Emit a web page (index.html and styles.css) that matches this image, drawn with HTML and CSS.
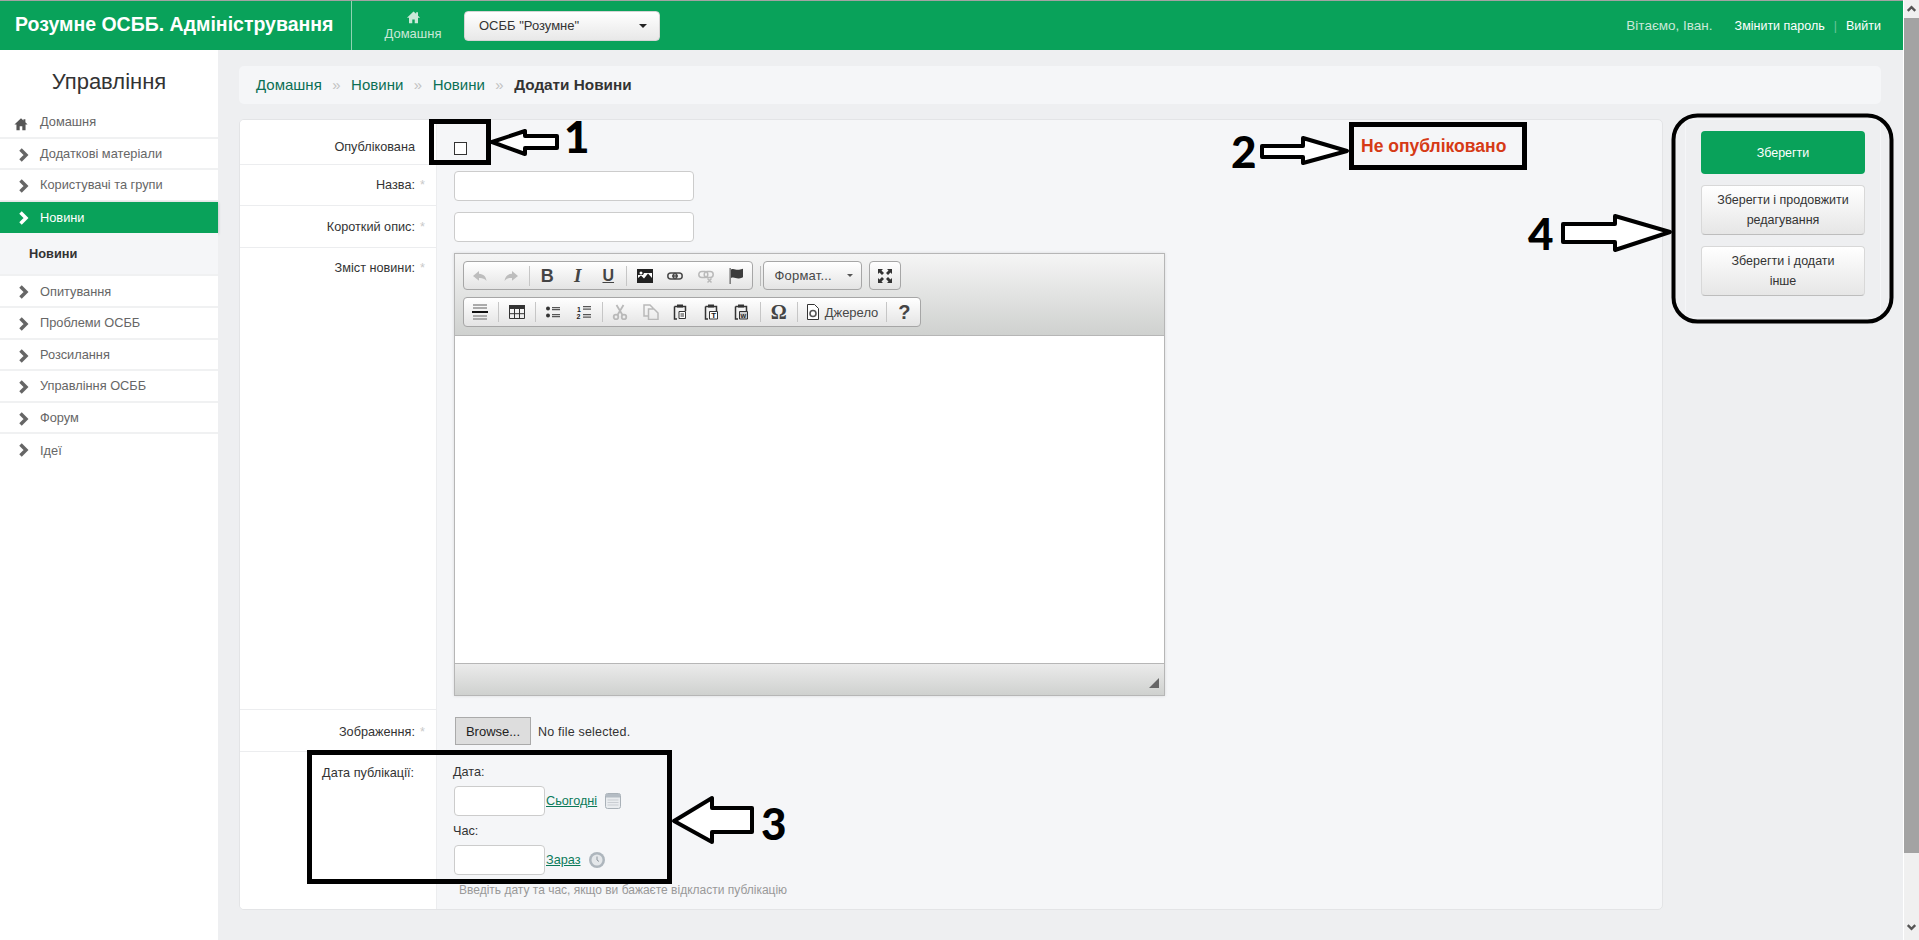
FILE: index.html
```html
<!DOCTYPE html>
<html lang="uk">
<head>
    <meta charset="UTF-8">
    <meta name="viewport" content="width=device-width, initial-scale=1.0">
    <title>Додати Новини</title>
    <link rel="stylesheet" href="styles.css">
</head>
<body>
    <div class="page">
        <header class="topbar">
            <div class="brand">Розумне ОСББ. Адміністрування</div>
            <a class="top-home">
                <svg class="top-home-icon" viewBox="0 0 16 16"><path d="M8 1.5 1 8.2h2.2V14h3.5V10h2.6v4h3.5V8.2H15L12.8 6V2.5h-2v1.6z"/></svg>
                <span>Домашня</span>
            </a>
            <div class="org-select"><span>ОСББ "Розумне"</span><i class="caret"></i></div>
            <div class="top-user">
                <span class="welcome">Вітаємо, <b>Іван.</b></span>
                <a>Змінити пароль</a>
                <span class="pipe">|</span>
                <a>Вийти</a>
            </div>
        </header>

        <div class="main">
            <aside class="sidebar">
                <h2 class="side-title">Управління</h2>
                <ul class="side-menu">
                    <li><svg class="side-icon" viewBox="0 0 16 16"><path d="M8 1.5 0.5 8.5h2.3V15h3.7v-4.5h3V15h3.7V8.5h2.3L13 6V2.5h-2.2v1.4z"/></svg>Домашня</li>
                    <li><svg class="side-chev" viewBox="0 0 12 14"><path d="M2.5 1.5 8 7l-5.5 5.5"/></svg>Додаткові матеріали</li>
                    <li><svg class="side-chev" viewBox="0 0 12 14"><path d="M2.5 1.5 8 7l-5.5 5.5"/></svg>Користувачі та групи</li>
                    <li class="active"><svg class="side-chev" viewBox="0 0 12 14"><path d="M2.5 1.5 8 7l-5.5 5.5"/></svg>Новини</li>
                    <li class="sub">Новини</li>
                    <li><svg class="side-chev" viewBox="0 0 12 14"><path d="M2.5 1.5 8 7l-5.5 5.5"/></svg>Опитування</li>
                    <li><svg class="side-chev" viewBox="0 0 12 14"><path d="M2.5 1.5 8 7l-5.5 5.5"/></svg>Проблеми ОСББ</li>
                    <li><svg class="side-chev" viewBox="0 0 12 14"><path d="M2.5 1.5 8 7l-5.5 5.5"/></svg>Розсилання</li>
                    <li><svg class="side-chev" viewBox="0 0 12 14"><path d="M2.5 1.5 8 7l-5.5 5.5"/></svg>Управління ОСББ</li>
                    <li><svg class="side-chev" viewBox="0 0 12 14"><path d="M2.5 1.5 8 7l-5.5 5.5"/></svg>Форум</li>
                    <li class="last"><svg class="side-chev" viewBox="0 0 12 14"><path d="M2.5 1.5 8 7l-5.5 5.5"/></svg>Ідеї</li>
                </ul>
            </aside>

            <div class="content">
                <div class="breadcrumb">
                    <a>Домашня</a><span class="sep">»</span><a>Новини</a><span class="sep">»</span><a>Новини</a><span class="sep">»</span><b>Додати Новини</b>
                </div>

                <div class="columns">
                    <form class="card">
                        <div class="form-row row-check">
                            <div class="form-label">Опублікована</div>
                            <div class="form-field"><span class="checkbox"></span><span class="status">Не опубліковано</span></div>
                        </div>
                        <div class="form-row row-text">
                            <div class="form-label">Назва:<span class="req">*</span></div>
                            <div class="form-field"><input class="text-input" type="text"></div>
                        </div>
                        <div class="form-row row-text2">
                            <div class="form-label">Короткий опис:<span class="req">*</span></div>
                            <div class="form-field"><input class="text-input" type="text"></div>
                        </div>
                        <div class="form-row row-editor">
                            <div class="form-label">Зміст новини:<span class="req">*</span></div>
                            <div class="form-field">
                                <div class="editor">
                                    <div class="editor-top">
                                        <div class="tool-line">
                                            <div class="toolgroup">
                                                <span class="tool"><svg viewBox="0 0 16 16" class="off"><path d="M7 3 1 8l6 4.8V10c3-.2 5.5.5 7.5 3-.5-4.5-3-7-7.5-7.3z"/></svg></span>
                                                <span class="tool"><svg viewBox="0 0 16 16" class="off"><path d="M9 3l6 5-6 4.8V10c-3-.2-5.5.5-7.5 3C2 8.500 4.500 6 9 5.700z"/></svg></span>
                                                <i class="tool-sep"></i>
                                                <span class="tool letter bold">B</span>
                                                <span class="tool letter ital">I</span>
                                                <span class="tool letter under">U</span>
                                                <i class="tool-sep"></i>
                                                <span class="tool"><svg viewBox="0 0 16 16"><rect x="0.500" y="1.500" width="15" height="13" fill="#fff" stroke="#222"/><path d="M1 14V10l3-2.500 3 3 4-5 4 4.500v4z" fill="#222"/><path d="M1 2h14v3H7L6 7H1z" fill="#222"/><circle cx="4" cy="5" r="1.500" fill="#fff"/></svg></span>
                                                <span class="tool"><svg viewBox="0 0 16 16" class="line"><rect x="0.800" y="5" width="9" height="6" rx="3"/><rect x="6.200" y="5" width="9" height="6" rx="3"/><path d="M5 8h6"/></svg></span>
                                                <span class="tool"><svg viewBox="0 0 16 16" class="line faint"><rect x="0.800" y="3.500" width="9" height="6" rx="3"/><rect x="6.200" y="3.500" width="9" height="6" rx="3"/><path d="M9.500 10.500l4 4m0-4-4 4"/></svg></span>
                                                <span class="tool"><svg viewBox="0 0 16 16"><path d="M1.500 0h1.300v16H1.500z" fill="#666"/><path d="M3 1.500c3-1.500 5 1 8 .2 1.500-.3 3-.7 4-1v8.500c-1 .6-2.500 1-4 1.200-3 .4-5-1.800-8-.4z" fill="#3c3c3c"/></svg></span>
                                            </div>
                                            <i class="bar-sep"></i>
                                            <div class="combo"><span>Формат...</span><i class="caret small"></i></div>
                                            <div class="toolgroup maximize">
                                                <span class="tool"><svg viewBox="0 0 16 16"><path d="M1 1h5L4.500 2.500 7 5 5 7 2.500 4.500 1 6zM15 1v5l-1.500-1.500L11 7 9 5l2.500-2.500L10 1zM1 15v-5l1.500 1.500L5 9l2 2-2.500 2.500L6 15zM15 15h-5l1.500-1.500L9 11l2-2 2.500 2.500L15 10z" fill="#333"/></svg></span>
                                            </div>
                                        </div>
                                        <div class="tool-line">
                                            <div class="toolgroup tall">
                                                <span class="tool"><svg viewBox="0 0 16 16"><path d="M1 0h14v2H1zM1 3h14v2H1zM1 11h14v2H1zM1 14h14v2H1z" fill="#aaa"/><path d="M0 7h16v2H0z" fill="#111"/></svg></span>
                                                <i class="tool-sep"></i>
                                                <span class="tool"><svg viewBox="0 0 16 16"><rect x="0" y="1" width="16" height="4" fill="#333"/><path d="M.500 5v9.500h15V5M5.500 5v9.500M10.500 5v9.500M.500 9.700h15" fill="none" stroke="#333"/></svg></span>
                                                <i class="tool-sep"></i>
                                                <span class="tool"><svg viewBox="0 0 16 16"><circle cx="3" cy="4.500" r="2" fill="#333"/><circle cx="3" cy="11.500" r="2" fill="#333"/><path d="M7 3h8v1.200H7zM7 5h8v1.200H7zM7 10h8v1.200H7zM7 12h8v1.200H7z" fill="#555"/></svg></span>
                                                <span class="tool"><svg viewBox="0 0 16 16"><text x="1" y="7.500" class="mini">1</text><text x="0.500" y="14.500" class="mini">2</text><path d="M7 2h8v1.200H7zM7 4.500h8v1.200H7zM7 10h8v1.200H7zM7 12.500h8v1.200H7z" fill="#555"/></svg></span>
                                                <i class="tool-sep"></i>
                                                <span class="tool"><svg viewBox="0 0 16 16" class="line faint thick"><circle cx="4" cy="13" r="2.300"/><circle cx="12" cy="13" r="2.300"/><path d="M5.500 11 11.500 1M10.500 11 4.500 1"/></svg></span>
                                                <span class="tool"><svg viewBox="0 0 16 16" class="line faint"><path d="M1 1h6l3 3v1H5.500v7H1zM5.500 5H11l4 4v6.500H5.500z" fill="none"/></svg></span>
                                                <span class="tool"><svg viewBox="0 0 16 16"><use href="#clip"/><path d="M6 7.500h6.500v7H6z" fill="#fff" stroke="#333"/><path d="M7.500 9.500h3.500v1H7.500zM7.500 11.500h3.500v1H7.500z" fill="#333"/></svg></span>
                                                <span class="tool"><svg viewBox="0 0 16 16"><use href="#clip"/><path d="M5.500 7.500h8v7.500h-8z" fill="#fff" stroke="#333"/><text x="7.300" y="14" class="mini strong">T</text></svg></span>
                                                <span class="tool"><svg viewBox="0 0 16 16"><use href="#clip"/><path d="M5.500 7.500h8v7.500h-8z" fill="#ccc" stroke="#333"/><text x="6.500" y="14" class="mini narrow">W</text></svg></span>
                                                <i class="tool-sep"></i>
                                                <span class="tool letter omega">Ω</span>
                                                <i class="tool-sep"></i>
                                                <span class="tool source"><svg viewBox="0 0 16 16"><path d="M2.500.500h7l4 4v11h-11z" fill="#fff" stroke="#333"/><circle cx="8" cy="9.500" r="3" fill="none" stroke="#555" stroke-width="1.600"/></svg><span>Джерело</span></span>
                                                <i class="tool-sep"></i>
                                                <span class="tool letter help">?</span>
                                            </div>
                                        </div>
                                    </div>
                                    <div class="editor-body"></div>
                                    <div class="editor-bottom"><i class="resizer"></i></div>
                                </div>
                            </div>
                        </div>
                        <div class="form-row row-file">
                            <div class="form-label">Зображення:<span class="req">*</span></div>
                            <div class="form-field"><span class="file-btn">Browse...</span><span class="file-name">No file selected.</span></div>
                        </div>
                        <div class="form-row row-date">
                            <div class="form-label">Дата публікації:</div>
                            <div class="form-field">
                                <div class="date-label">Дата:</div>
                                <div class="date-line">
                                    <input class="date-input" type="text"><a class="date-link">Сьогодні</a>
                                    <svg class="date-icon" viewBox="0 0 16 16"><rect x="0.500" y="0.500" width="15" height="15" rx="2" fill="#e9ecef" stroke="#a9b1b8"/><rect x="1" y="1" width="14" height="3.500" fill="#b4bcc4"/><path d="M2.500 7h11M2.500 9.500h11M2.500 12h11" stroke="#c9cdd2"/></svg>
                                </div>
                                <div class="date-label">Час:</div>
                                <div class="date-line">
                                    <input class="date-input" type="text"><a class="date-link">Зараз</a>
                                    <svg class="date-icon clock" viewBox="0 0 16 16"><circle cx="8" cy="8" r="8" fill="#aeb6bd"/><circle cx="8" cy="8" r="5.500" fill="#e4e7ea"/><path d="M8 4.500V8l2 1.500" fill="none" stroke="#8d959c"/></svg>
                                </div>
                                <p class="help-text">Введіть дату та час, якщо ви бажаєте відкласти публікацію</p>
                            </div>
                        </div>
                    </form>

                    <div class="actions">
                        <button class="btn primary" type="button">Зберегти</button>
                        <button class="btn" type="button">Зберегти і продовжити<br>редагування</button>
                        <button class="btn" type="button">Зберегти і додати<br>інше</button>
                    </div>
                </div>
            </div>
        </div>
    </div>

    <div class="scrollbar">
        <svg class="scroll-arrow" viewBox="0 0 16 18"><path d="M4 11l4-4 4 4" /></svg>
        <div class="scroll-thumb"></div>
        <svg class="scroll-arrow down" viewBox="0 0 16 18"><path d="M4 7l4 4 4-4" /></svg>
    </div>

    <!-- numbered marks drawn over the screenshot -->
    <svg class="marks" viewBox="0 0 1919 940">
        <defs>
            <g id="clip"><path d="M1.500 2.500h11V7M4 15H1.500V2.500" fill="none" stroke="#333" stroke-width="1.500"/><rect x="4" y="0.500" width="6" height="3" fill="#333"/></g>
        </defs>
        <g class="mark-box">
            <rect x="431.500" y="121.500" width="57" height="41"/>
            <rect x="1351.500" y="124.500" width="173" height="43"/>
            <rect x="309.500" y="752.500" width="360" height="129"/>
            <rect class="round" x="1673.500" y="115.500" width="218" height="206" rx="24"/>
        </g>
        <g class="mark-arrow">
            <polygon points="492,142 525,131 525,136 557,136 557,148 525,148 525,154"/>
            <polygon points="1262,146 1303,146 1303,138 1347,151 1303,163 1303,157 1262,157"/>
            <polygon points="674,821 712,798 712,808 752,808 752,832 712,832 712,842"/>
            <polygon points="1563,224 1615,224 1615,216 1670,232 1615,250 1615,242 1563,242"/>
        </g>
        <g class="mark-num">
            <text x="564" y="153">1</text>
            <text x="1231" y="168">2</text>
            <text x="761" y="840">3</text>
            <text x="1528" y="250">4</text>
        </g>
    </svg>
</body>
</html>
```

FILE: styles.css
```css
html, body {
    margin: 0;
    height: 940px;
    overflow: hidden;
}
body {
    display: flex;
    position: relative;
    font-family: "Liberation Sans", Arial, sans-serif;
    font-size: 12.700px;
    color: #333;
    background-color: #eeeff1;
}
a {
    cursor: pointer;
}
.page {
    flex: 1;
    min-width: 0;
    display: flex;
    flex-direction: column;
}

/* top bar */
.topbar {
    height: 50px;
    flex: none;
    box-sizing: border-box;
    display: flex;
    align-items: center;
    border-top: 1px solid #a3a3a3;
    background-color: #09a25a;
    color: #fff;
}
.brand {
    width: 336px;
    height: 49px;
    box-sizing: content-box;
    padding-left: 15px;
    border-right: 1px solid #8fd3b2;
    font-size: 19.500px;
    font-weight: bold;
    line-height: 47px;
    white-space: nowrap;
}
.top-home {
    width: 112px;
    box-sizing: border-box;
    padding-left: 10px;
    display: flex;
    flex-direction: column;
    align-items: center;
    font-size: 13px;
    color: #c9e8d8;
}
.top-home-icon {
    width: 15px;
    height: 15px;
    margin-bottom: 1px;
    fill: #c9e8d8;
}
.org-select {
    width: 196px;
    height: 30px;
    box-sizing: border-box;
    padding: 0 12px 0 14px;
    display: flex;
    align-items: center;
    justify-content: space-between;
    border-radius: 4px;
    border: 1px solid #d5d5d5;
    background: linear-gradient(#fff, #e8e8e8);
    font-size: 13px;
    color: #333;
}
.caret {
    width: 0;
    height: 0;
    border-left: 4px solid transparent;
    border-right: 4px solid transparent;
    border-top: 4px solid #222;
}
.caret.small {
    border-left-width: 3px;
    border-right-width: 3px;
    border-top: 3px solid #555;
}
.top-user {
    margin-left: auto;
    padding-right: 22px;
    display: flex;
    align-items: center;
    font-size: 12.500px;
}
.top-user a {
    color: #fff;
}
.welcome {
    margin-right: 22px;
    font-size: 13.500px;
    color: #c9e8d8;
}
.welcome b {
    font-weight: normal;
}
.pipe {
    margin: 0 9px;
    color: #6cc498;
}

/* left menu */
.main {
    flex: 1;
    display: flex;
    min-height: 0;
}
.sidebar {
    width: 218px;
    flex: none;
    background-color: #fff;
}
.side-title {
    margin: 0;
    padding: 20px 0 13px;
    font-size: 22px;
    font-weight: normal;
    line-height: 24px;
    text-align: center;
    color: #333;
}
.side-menu {
    margin: 0;
    padding: 0;
    list-style: none;
    font-size: 12.800px;
    color: #666;
}
.side-menu li {
    height: 31.600px;
    box-sizing: border-box;
    display: flex;
    align-items: center;
    padding-left: 40px;
    position: relative;
    border-bottom: 2px solid #f0f1f2;
}
.side-menu li.last {
    border-bottom: none;
}
.side-menu li.active {
    background-color: #09a25a;
    color: #fff;
    border-bottom: none;
    box-shadow: 0 1px 3px rgba(0, 0, 0, 0.25);
}
.side-menu li.sub {
    height: 43px;
    padding-left: 29px;
    background-color: #f5f6f8;
    font-weight: bold;
    color: #333;
}
.side-icon {
    position: absolute;
    left: 14px;
    top: 10px;
    width: 14px;
    height: 14px;
    fill: #555;
}
.side-chev {
    position: absolute;
    left: 18px;
    top: 9px;
    width: 12px;
    height: 14px;
    fill: none;
    stroke: #666;
    stroke-width: 3.500;
}
.active .side-chev {
    stroke: #fff;
}

/* breadcrumb */
.content {
    flex: 1;
    min-width: 0;
    padding: 16px 22px 0 21px;
}
.breadcrumb {
    height: 38px;
    box-sizing: border-box;
    padding: 0 0 1px 17px;
    display: flex;
    align-items: center;
    border-radius: 5px;
    background-color: #f5f6f8;
    font-size: 15px;
    color: #0b6f55;
}
.breadcrumb b {
    font-size: 15.300px;
    color: #333;
}
.breadcrumb .sep {
    margin: 0 10.500px;
    color: #c2c2c2;
}
.columns {
    display: flex;
    gap: 22px;
    margin-top: 15px;
    align-items: flex-start;
}

/* form */
.card {
    flex: 1;
    min-width: 0;
    height: 791px;
    box-sizing: border-box;
    display: flex;
    flex-direction: column;
    overflow: hidden;
    border: 1px solid #e3e4e6;
    border-radius: 5px;
    background-color: #f5f6f8;
}
.form-row {
    display: flex;
}
.form-label {
    width: 196px;
    flex: none;
    box-sizing: border-box;
    padding: 12px 21px 0 0;
    text-align: right;
    background-color: #fff;
    border-bottom: 1px solid #ecedef;
    line-height: 16px;
}
.form-field {
    flex: 1;
    min-width: 0;
    box-sizing: border-box;
    padding-left: 17px;
    border-left: 1px solid #ecedef;
    position: relative;
}
.req {
    display: inline-block;
    margin: 0 -10px 0 2px;
    width: 8px;
    color: #c9c9c9;
}
.row-check { height: 45px; }
.row-check .form-label { padding-top: 19px; }
.row-text { height: 41px; }
.row-text .form-field { padding-top: 6px; }
.row-text2 { height: 42px; }
.row-text2 .form-field { padding-top: 6px; }
.row-text2 .form-label { padding-top: 13px; }
.row-editor { height: 462px; }
.row-editor .form-field { padding-top: 5px; }
.row-file { height: 42px; }
.row-file .form-label { padding-top: 14px; }
.row-file .form-field { padding-top: 7px; display: flex; align-items: flex-start; }
.row-date { flex: 1; }
.row-date .form-label { border-bottom: none; padding-top: 13px; padding-right: 22px; }
.checkbox {
    display: block;
    width: 11px;
    height: 11px;
    margin-top: 22px;
    background-color: #fff;
    border: 1px solid #333;
}
.status {
    position: absolute;
    left: 924px;
    top: 16px;
    font-size: 17.500px;
    font-weight: bold;
    line-height: 20px;
    color: #d63a16;
}
.text-input {
    display: block;
    width: 240px;
    height: 30px;
    box-sizing: border-box;
    border: 1px solid #ccc;
    border-radius: 4px;
    background-color: #fff;
}

/* text editor */
.editor {
    width: 711px;
    height: 443px;
    box-sizing: border-box;
    display: flex;
    flex-direction: column;
    border: 1px solid #b6b6b6;
    box-shadow: 0 0 3px rgba(0, 0, 0, 0.12);
}
.editor-top {
    height: 82px;
    flex: none;
    box-sizing: border-box;
    padding: 7px 0 0 8px;
    border-bottom: 1px solid #b6b6b6;
    background: linear-gradient(#f5f5f5, #cfd1cf);
}
.tool-line {
    display: flex;
    align-items: flex-start;
    margin-bottom: 7px;
}
.toolgroup {
    height: 29px;
    box-sizing: border-box;
    padding-left: 1px;
    display: flex;
    align-items: center;
    border: 1px solid #a6a6a6;
    border-radius: 4px;
    background: linear-gradient(#fff, #e4e4e4);
}
.toolgroup.tall {
    height: 30px;
}
.maximize {
    margin-left: 7px;
    padding-left: 0;
}
.tool {
    width: 30.500px;
    flex: none;
    display: flex;
    align-items: center;
    justify-content: center;
}
.tool svg {
    width: 16px;
    height: 16px;
    fill: #444;
}
.tool svg.off {
    fill: #bdbdbd;
}
.tool svg.line {
    fill: none;
    stroke: #4a4a4a;
    stroke-width: 1.500;
}
.tool svg.faint {
    stroke: #b9b9b9;
}
.tool svg.thick {
    stroke-width: 1.800;
}
.tool-sep {
    width: 1px;
    height: 20px;
    flex: none;
    margin: 0 2.500px;
    background-color: #c6c6c6;
}
.bar-sep {
    width: 1px;
    height: 20px;
    margin: 5px 2px 0 7px;
    background-color: #bbb;
}
.letter {
    font-size: 18px;
    font-weight: bold;
    color: #444;
    line-height: 20px;
}
.ital {
    font-family: "Liberation Serif", serif;
    font-style: italic;
    font-size: 19px;
}
.under {
    text-decoration: underline;
    font-size: 16px;
}
.omega {
    font-family: "Liberation Serif", serif;
    font-size: 20px;
}
.help {
    font-size: 20px;
}
.mini {
    font-family: "Liberation Sans", sans-serif;
    font-size: 7px;
    font-weight: bold;
    fill: #222;
}
.mini.strong {
    font-size: 8px;
}
.mini.narrow {
    font-size: 6px;
}
.tool.source {
    width: 83px;
    gap: 4px;
    font-size: 13px;
    color: #474747;
}
.combo {
    width: 99px;
    height: 29px;
    box-sizing: border-box;
    padding: 0 8px 0 11px;
    display: flex;
    align-items: center;
    justify-content: space-between;
    border: 1px solid #a6a6a6;
    border-radius: 4px;
    background: linear-gradient(#fff, #e4e4e4);
    font-size: 13px;
    letter-spacing: 0.200px;
    color: #484848;
}
.editor-body {
    flex: 1;
    background-color: #fff;
}
.editor-bottom {
    height: 31px;
    flex: none;
    position: relative;
    border-top: 1px solid #b6b6b6;
    background: linear-gradient(#ebebeb, #cfd1cf);
}
.resizer {
    position: absolute;
    right: 5px;
    bottom: 7px;
    width: 0;
    height: 0;
    border-left: 10px solid transparent;
    border-bottom: 10px solid #666;
}

/* file and date */
.file-btn {
    width: 76px;
    height: 28px;
    margin-left: 1px;
    box-sizing: border-box;
    border: 1px solid #aaa;
    background-color: #ddd;
    text-align: center;
    font-size: 13px;
    line-height: 28px;
    color: #222;
}
.file-name {
    margin-left: 7px;
    font-size: 12.500px;
    line-height: 30px;
    letter-spacing: 0.200px;
}
.row-date .form-field {
    padding-top: 12px;
}
.date-label {
    margin-left: -1px;
    line-height: 16px;
}
.date-line {
    display: flex;
    align-items: center;
    margin: 6px 0 7px;
}
.date-input {
    width: 91px;
    height: 30px;
    box-sizing: border-box;
    border: 1px solid #ccc;
    border-radius: 4px;
    background-color: #fff;
}
.date-link {
    margin-left: 1px;
    color: #0b7a5a;
    text-decoration: underline;
}
.date-icon {
    width: 16px;
    height: 16px;
    margin-left: 8px;
}
.help-text {
    margin: 8px 0 0 5px;
    font-size: 12px;
    color: #999;
}

/* save buttons */
.actions {
    width: 196px;
    height: 199px;
    flex: none;
    box-sizing: border-box;
    padding: 11px 15px 0;
    display: flex;
    flex-direction: column;
    gap: 11px;
    border: 1px solid #f5f6f8;
    border-radius: 5px;
}
.btn {
    min-height: 50px;
    padding: 4px 6px;
    border: 1px solid #d8d8d8;
    border-bottom-color: #bdbdbd;
    border-radius: 4px;
    background: linear-gradient(#fff, #e6e6e6);
    font-family: inherit;
    font-size: 12.500px;
    line-height: 20px;
    color: #333;
}
.btn.primary {
    min-height: 43px;
    border: none;
    background: #09a25a;
    color: #fff;
}

/* scrollbar */
.scrollbar {
    width: 16px;
    height: 940px;
    flex: none;
    box-sizing: border-box;
    display: flex;
    flex-direction: column;
    border-left: 1px solid #fff;
    background-color: #f0f0f0;
}
.scroll-arrow {
    width: 15px;
    height: 18px;
    flex: none;
    fill: none;
    stroke: #555;
    stroke-width: 2.500;
}
.scroll-thumb {
    height: 835px;
    flex: none;
    background-color: #a3a3a3;
}
.scroll-arrow.down {
    margin-top: auto;
    margin-bottom: 4px;
}

/* marks over the picture */
.marks {
    position: absolute;
    left: 0;
    top: 0;
    width: 1919px;
    height: 940px;
    pointer-events: none;
}
.mark-box rect {
    fill: none;
    stroke: #000;
    stroke-width: 5;
}
.mark-box rect.round {
    stroke-width: 4;
}
.mark-arrow polygon {
    fill: #fff;
    stroke: #000;
    stroke-width: 4;
    stroke-linejoin: round;
}
.mark-num text {
    font-family: Lato, sans-serif;
    font-size: 44px;
    font-weight: 900;
    fill: #000;
}
```
